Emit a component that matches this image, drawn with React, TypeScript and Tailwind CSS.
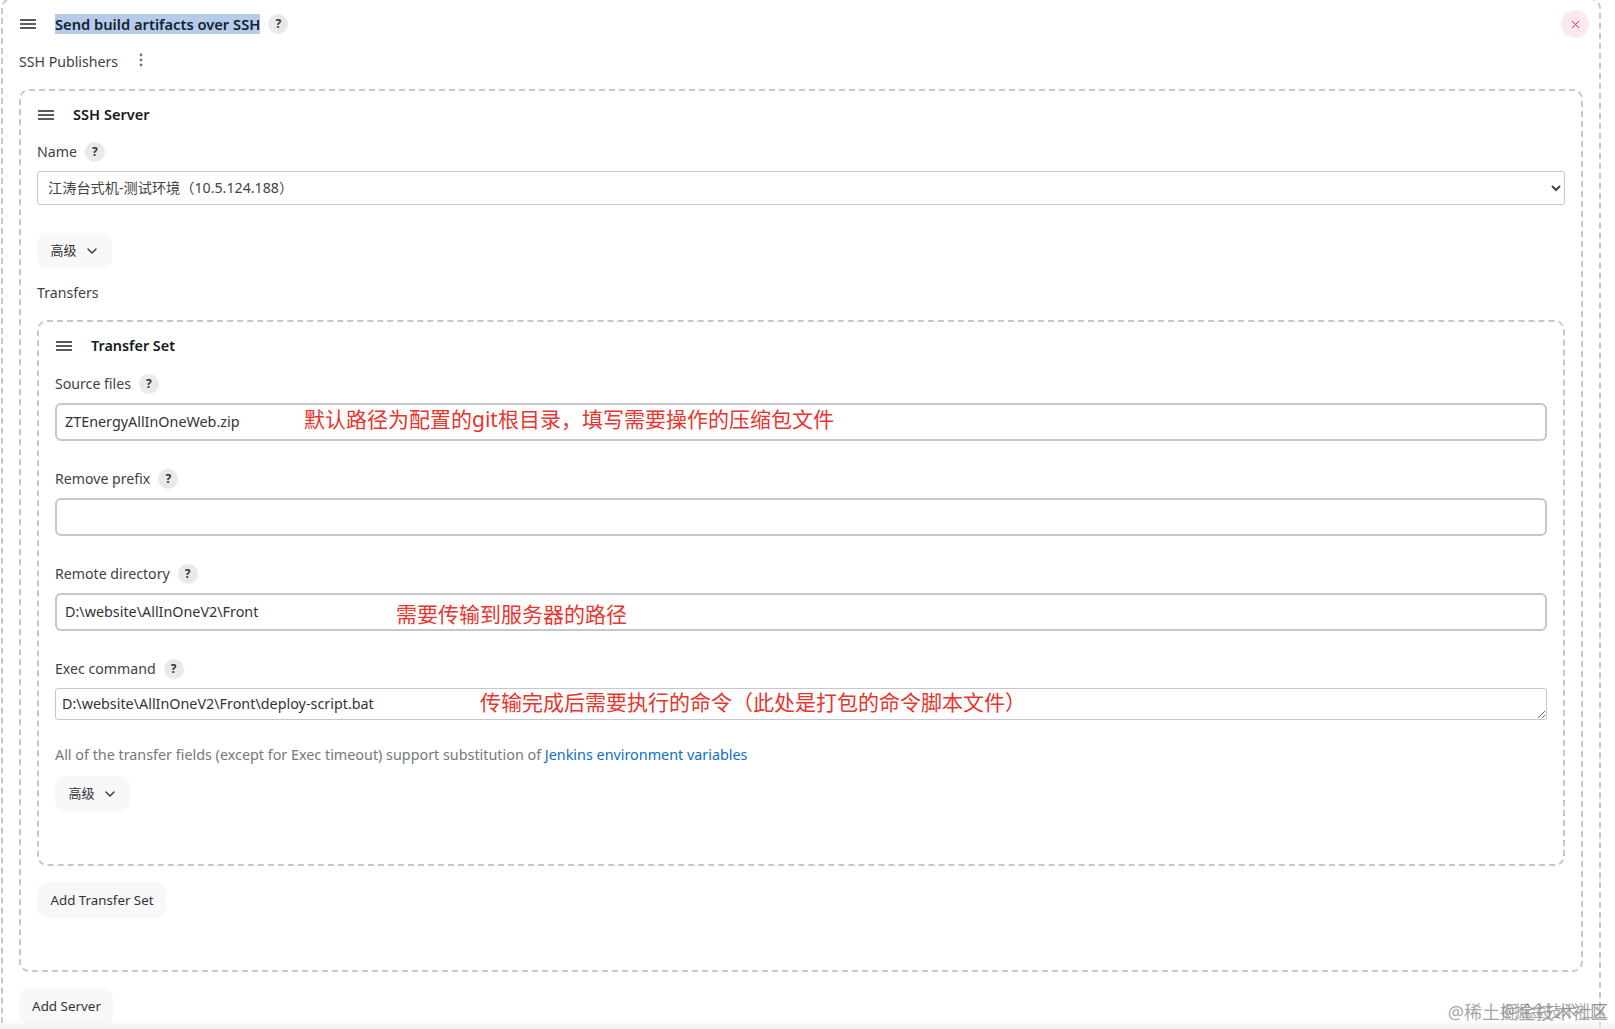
import { ChevronDown, X } from "lucide-react";
import type { ReactNode } from "react";

const font = "font-['Noto_Sans','Noto_Sans_CJK_SC',sans-serif]";

function Grip() {
  return (
    <svg width="16" height="10" viewBox="0 0 16 10" className="ml-px shrink-0 text-[#20252b]">
      <path d="M0 1H16M0 5H16M0 9H16" stroke="currentColor" strokeWidth="1.4" />
    </svg>
  );
}

function Help() {
  return (
    <span className="ml-2 flex h-5 w-5 shrink-0 items-center justify-center rounded-full bg-[#e9e9eb] text-xs font-bold text-[#333]">
      ?
    </span>
  );
}

function Label({ children }: { children: ReactNode }) {
  return (
    <div className="flex h-[22px] items-center text-[14.15px] text-[#3d4148]">
      {children}
      <Help />
    </div>
  );
}

function Advanced() {
  return (
    <button className="flex h-9 w-[75px] items-center justify-center gap-[7px] rounded-[10px] bg-[#f8f8fa] pl-px text-[13px] text-[#333]">
      高级
      <ChevronDown size={16} strokeWidth={2} />
    </button>
  );
}

function Note({ pos, children }: { pos: string; children: ReactNode }) {
  return (
    <span className={`pointer-events-none absolute -translate-y-1/2 whitespace-nowrap text-[21px] leading-none text-[#e8352e] ${pos}`}>
      {children}
    </span>
  );
}

function Field({ value, note }: { value?: string; note?: ReactNode }) {
  return (
    <div className="relative mt-2">
      <input
        readOnly
        value={value ?? ""}
        className="block h-[38px] w-full rounded-md border-2 border-[#c5c7ca] bg-white px-2 pb-[2px] text-[14.35px] text-[#333] outline-none"
      />
      {note}
    </div>
  );
}

export default function App() {
  return (
    <div className={`relative h-[1029px] w-full overflow-hidden bg-white ${font}`}>
      <div className="-mt-[2px] ml-px h-[1100px] w-[1600px] rounded-[10px] border-2 border-dashed border-[#c5c7ca] px-4 pt-[10px]">
        <div className="flex h-7 items-center">
          <Grip />
          <span className="ml-[19px] bg-[#b5cbe9] text-[14.7px] font-semibold leading-[20px] text-[#14212f]">
            Send build artifacts over SSH
          </span>
          <Help />
          <button className="-mr-[6px] ml-auto flex h-7 w-7 items-center justify-center rounded-full bg-[#fbe9ed] text-[#e6004c]">
            <X size={13} strokeWidth={1.6} />
          </button>
        </div>

        <div className="mt-[13px] flex h-[22px] items-center text-[14.15px] text-[#3d4148]">
          SSH Publishers
          <svg width="4" height="14" viewBox="0 0 4 14" className="-mt-[5px] ml-[21px] text-[#777]">
            <circle cx="2" cy="2" r="1.4" fill="currentColor" />
            <circle cx="2" cy="7" r="1.4" fill="currentColor" />
            <circle cx="2" cy="12" r="1.4" fill="currentColor" />
          </svg>
        </div>

        <div className="mt-4 rounded-[10px] border-2 border-dashed border-[#c5c7ca] px-4 pb-[52px] pt-3">
          <div className="flex h-6 items-center">
            <Grip />
            <span className="ml-[19px] text-[14.6px] font-semibold text-[#14191f]">SSH Server</span>
          </div>

          <div className="mt-[14px]">
            <Label>Name</Label>
          </div>
          <select className="mt-2 block h-[34px] w-full rounded-[3px] border border-[#c5c7ca] bg-white pb-[2px] pl-[6px] text-[14.2px] text-[#444] outline-none">
            <option>江涛台式机-测试环境（10.5.124.188）</option>
          </select>

          <div className="mt-7">
            <Advanced />
          </div>

          <div className="mt-[13px] flex h-[22px] items-center text-[14.15px] text-[#3d4148]">Transfers</div>

          <div className="mt-4 rounded-[10px] border-2 border-dashed border-[#c5c7ca] px-4 pb-[52px] pt-3">
            <div className="flex h-6 items-center">
              <Grip />
              <span className="ml-[19px] text-[14.4px] font-semibold text-[#14191f]">Transfer Set</span>
            </div>

            <div className="mt-[15px]">
              <Label>Source files</Label>
            </div>
            <Field
              value="ZTEnergyAllInOneWeb.zip"
              note={<Note pos="left-[249px] top-[16px]">默认路径为配置的git根目录，填写需要操作的压缩包文件</Note>}
            />

            <div className="mt-[27px]">
              <Label>Remove prefix</Label>
            </div>
            <Field />

            <div className="mt-[27px]">
              <Label>Remote directory</Label>
            </div>
            <Field
              value="D:\website\AllInOneV2\Front"
              note={<Note pos="left-[341px] top-[21px]">需要传输到服务器的路径</Note>}
            />

            <div className="mt-[27px]">
              <Label>Exec command</Label>
            </div>
            <div className="relative mt-2">
              <textarea
                readOnly
                rows={1}
                value="D:\website\AllInOneV2\Front\deploy-script.bat"
                className="block h-8 w-full overflow-hidden rounded-[3px] border border-[#c5c7ca] bg-white px-[6px] py-[4px] text-[14.35px] leading-[22px] text-[#333] outline-none"
              />
              <Note pos="left-[425px] top-[14px]">传输完成后需要执行的命令（此处是打包的命令脚本文件）</Note>
            </div>

            <p className="mt-6 h-[22px] text-[14.35px] leading-[22px] text-[#74787f]">
              All of the transfer fields (except for Exec timeout) support substitution of{" "}
              <a className="text-[#0b6fc4]">Jenkins environment variables</a>
            </p>

            <div className="mt-[10px]">
              <Advanced />
            </div>
          </div>

          <button className="mt-4 block h-9 w-[129px] rounded-[10px] bg-[#f8f8fa] pl-px pt-[2px] text-[13.3px] text-[#333]">
            Add Transfer Set
          </button>
        </div>

        <button className="mt-4 block h-9 w-[94px] rounded-[10px] bg-[#f8f8fa] pl-px text-[13.4px] text-[#333]">
          Add Server
        </button>
      </div>

      {/* bottom fade from the page behind */}
      <div className="pointer-events-none absolute bottom-0 left-0 right-0 h-[10px] bg-gradient-to-b from-transparent to-[#f1f1f1]" />

      {/* watermark */}
      <span className="absolute bottom-[6px] right-[7px] text-[18px] leading-[22px] text-[#8e8e8e]/80">@稀土掘金技术社区</span>
      <span className="absolute bottom-[8px] right-[7px] text-[15.5px] leading-[20px] text-[#8e8e8e]/80">@掘金技术社区</span>
    </div>
  );
}
